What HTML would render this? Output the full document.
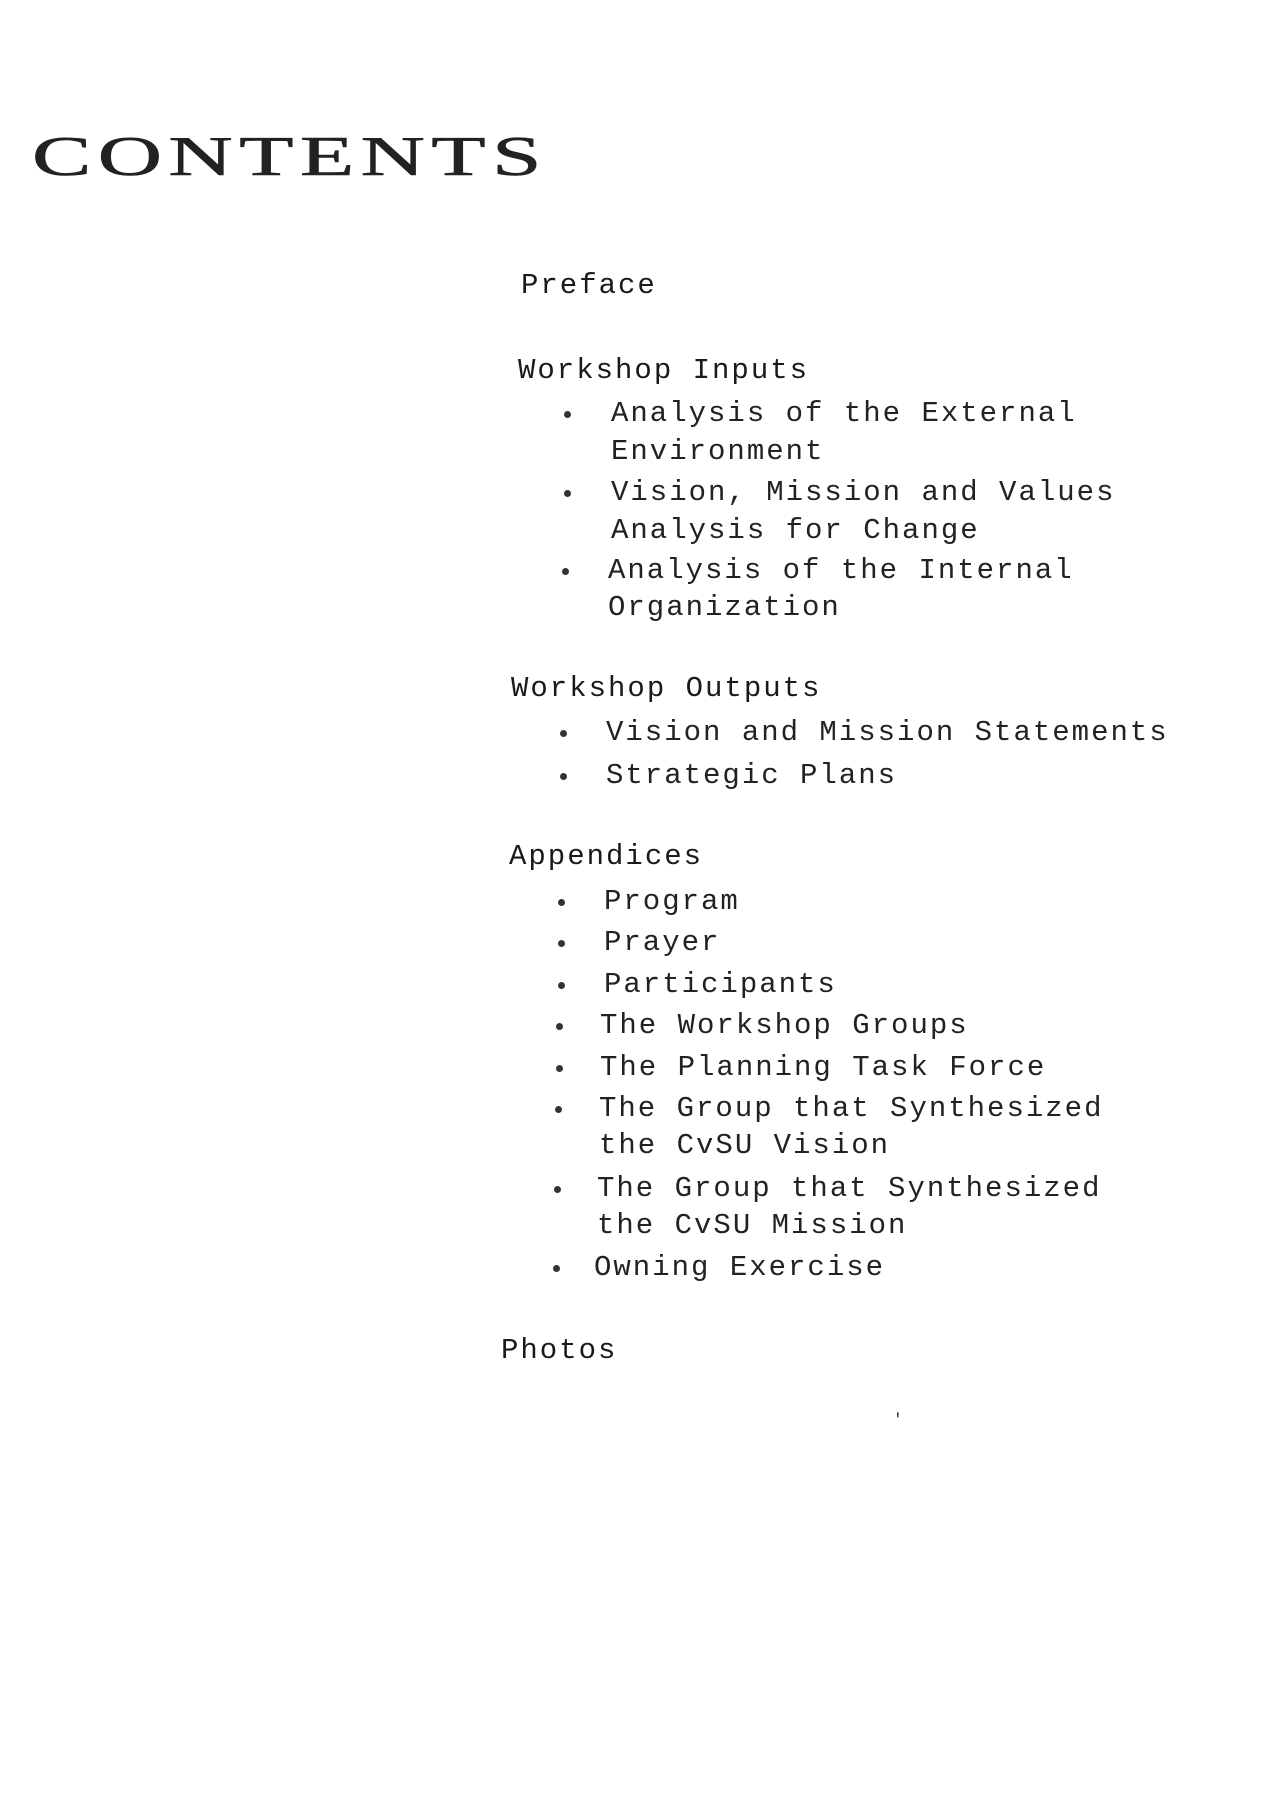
<!DOCTYPE html>
<html><head><meta charset="utf-8">
<style>
html,body{margin:0;padding:0;background:#fff;}
body{width:1272px;height:1800px;position:relative;overflow:hidden;}
.t{position:absolute;font-family:"Liberation Mono",monospace;font-size:29px;letter-spacing:2px;color:#222;line-height:30px;white-space:nowrap;}
.h{color:#1a1a1a;}
.b{position:absolute;width:7px;height:7px;border-radius:50%;background:#333;}
#title{position:absolute;left:32px;top:124px;font-family:"Liberation Serif",serif;font-size:56px;letter-spacing:4px;color:#222;line-height:66px;transform:scaleX(1.59);transform-origin:left;-webkit-text-stroke:0.6px #222;}
</style></head><body>
<div id="title">CONTENTS</div>

<div class="t h" style="left:521px;top:271px">Preface</div>
<div class="t h" style="left:518px;top:356px">Workshop Inputs</div>
<div class="b" style="left:564px;top:411px"></div>
<div class="t" style="left:611px;top:399px">Analysis of the External</div>
<div class="t" style="left:611px;top:437px">Environment</div>
<div class="b" style="left:564px;top:490px"></div>
<div class="t" style="left:611px;top:478px">Vision, Mission and Values</div>
<div class="t" style="left:611px;top:516px">Analysis for Change</div>
<div class="b" style="left:562px;top:568px"></div>
<div class="t" style="left:608px;top:556px">Analysis of the Internal</div>
<div class="t" style="left:608px;top:593px">Organization</div>

<div class="t h" style="left:511px;top:674px">Workshop Outputs</div>
<div class="b" style="left:560px;top:730px"></div>
<div class="t" style="left:606px;top:718px">Vision and Mission Statements</div>
<div class="b" style="left:560px;top:773px"></div>
<div class="t" style="left:606px;top:761px">Strategic Plans</div>

<div class="t h" style="left:509px;top:842px">Appendices</div>
<div class="b" style="left:558px;top:899px"></div>
<div class="t" style="left:604px;top:887px">Program</div>
<div class="b" style="left:558px;top:940px"></div>
<div class="t" style="left:604px;top:928px">Prayer</div>
<div class="b" style="left:558px;top:982px"></div>
<div class="t" style="left:604px;top:970px">Participants</div>
<div class="b" style="left:556px;top:1023px"></div>
<div class="t" style="left:600px;top:1011px">The Workshop Groups</div>
<div class="b" style="left:556px;top:1065px"></div>
<div class="t" style="left:600px;top:1053px">The Planning Task Force</div>
<div class="b" style="left:555px;top:1106px"></div>
<div class="t" style="left:599px;top:1094px">The Group that Synthesized</div>
<div class="t" style="left:599px;top:1131px">the CvSU Vision</div>
<div class="b" style="left:554px;top:1186px"></div>
<div class="t" style="left:597px;top:1174px">The Group that Synthesized</div>
<div class="t" style="left:597px;top:1211px">the CvSU Mission</div>
<div class="b" style="left:553px;top:1265px"></div>
<div class="t" style="left:594px;top:1253px">Owning Exercise</div>

<div class="t h" style="left:501px;top:1336px">Photos</div>
<div class="t" style="left:893px;top:1405px;font-size:16px">'</div>
</body></html>
